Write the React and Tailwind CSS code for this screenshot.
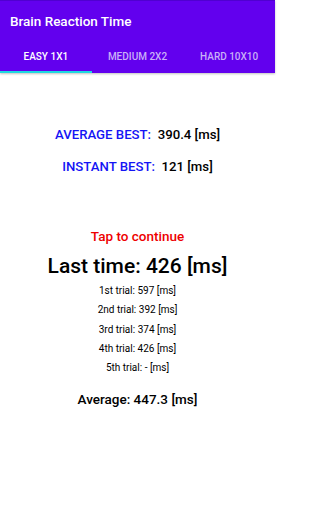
import React from "react";

const trials = [
    ["1st", "597"],
    ["2nd", "392"],
    ["3rd", "374"],
    ["4th", "426"],
    ["5th", "-"],
];

const tabs = ["EASY 1X1", "MEDIUM 2X2", "HARD 10X10"];

// Reaction time results screen
const App = () => {
    return (
        <div className="w-[275px] h-[512px] bg-white flex flex-col" style={{ fontFamily: "Roboto, 'Liberation Sans', sans-serif" }}>
            {/* App bar with tabs */}
            <div className="bg-[#6200ee] border-t border-[#5000d0] shadow-[0_1px_2px_rgba(0,0,0,0.25)]">
                <div className="h-[41px] flex items-center px-[10px]">
                    <h1 className="text-white text-[13.5px] font-medium">Brain Reaction Time</h1>
                </div>
                <div className="grid grid-cols-3 h-[31px]">
                    {tabs.map((t, i) => (
                        <div
                            key={t}
                            className={
                                i === 0
                                    ? "flex items-center justify-center text-[10px] font-medium text-white border-b-2 border-[#1fd8e0]"
                                    : "flex items-center justify-center text-[10px] font-medium text-[#c9b0f7] border-b-2 border-transparent"
                            }
                        >
                            {t}
                        </div>
                    ))}
                </div>
            </div>

            <div className="flex flex-col items-center">
                <p className="mt-[53px] text-[13.2px] font-medium leading-[18px]">
                    <span className="text-[#1414f5]">AVERAGE BEST:</span>
                    <span className="text-black">&nbsp; 390.4 [ms]</span>
                </p>
                <p className="mt-[14px] text-[13.2px] font-medium leading-[18px]">
                    <span className="text-[#1414f5]">INSTANT BEST:</span>
                    <span className="text-black">&nbsp; 121 [ms]</span>
                </p>

                <p className="mt-[52px] text-[13.5px] font-medium text-[#ee0000] leading-[16px]">Tap to continue</p>
                <p className="mt-[9px] text-[21px] font-medium text-black leading-[26px]">Last time: 426 [ms]</p>

                <div className="mt-[2px] flex flex-col items-center">
                    {trials.map(([n, v]) => (
                        <p key={n} className="text-[10px] text-black leading-[19.3px]">
                            {n} trial: {v} [ms]
                        </p>
                    ))}
                </div>

                <p className="mt-[14px] text-[13.5px] font-medium text-black leading-[16px]">Average: 447.3 [ms]</p>
            </div>
        </div>
    );
};

export default App;
